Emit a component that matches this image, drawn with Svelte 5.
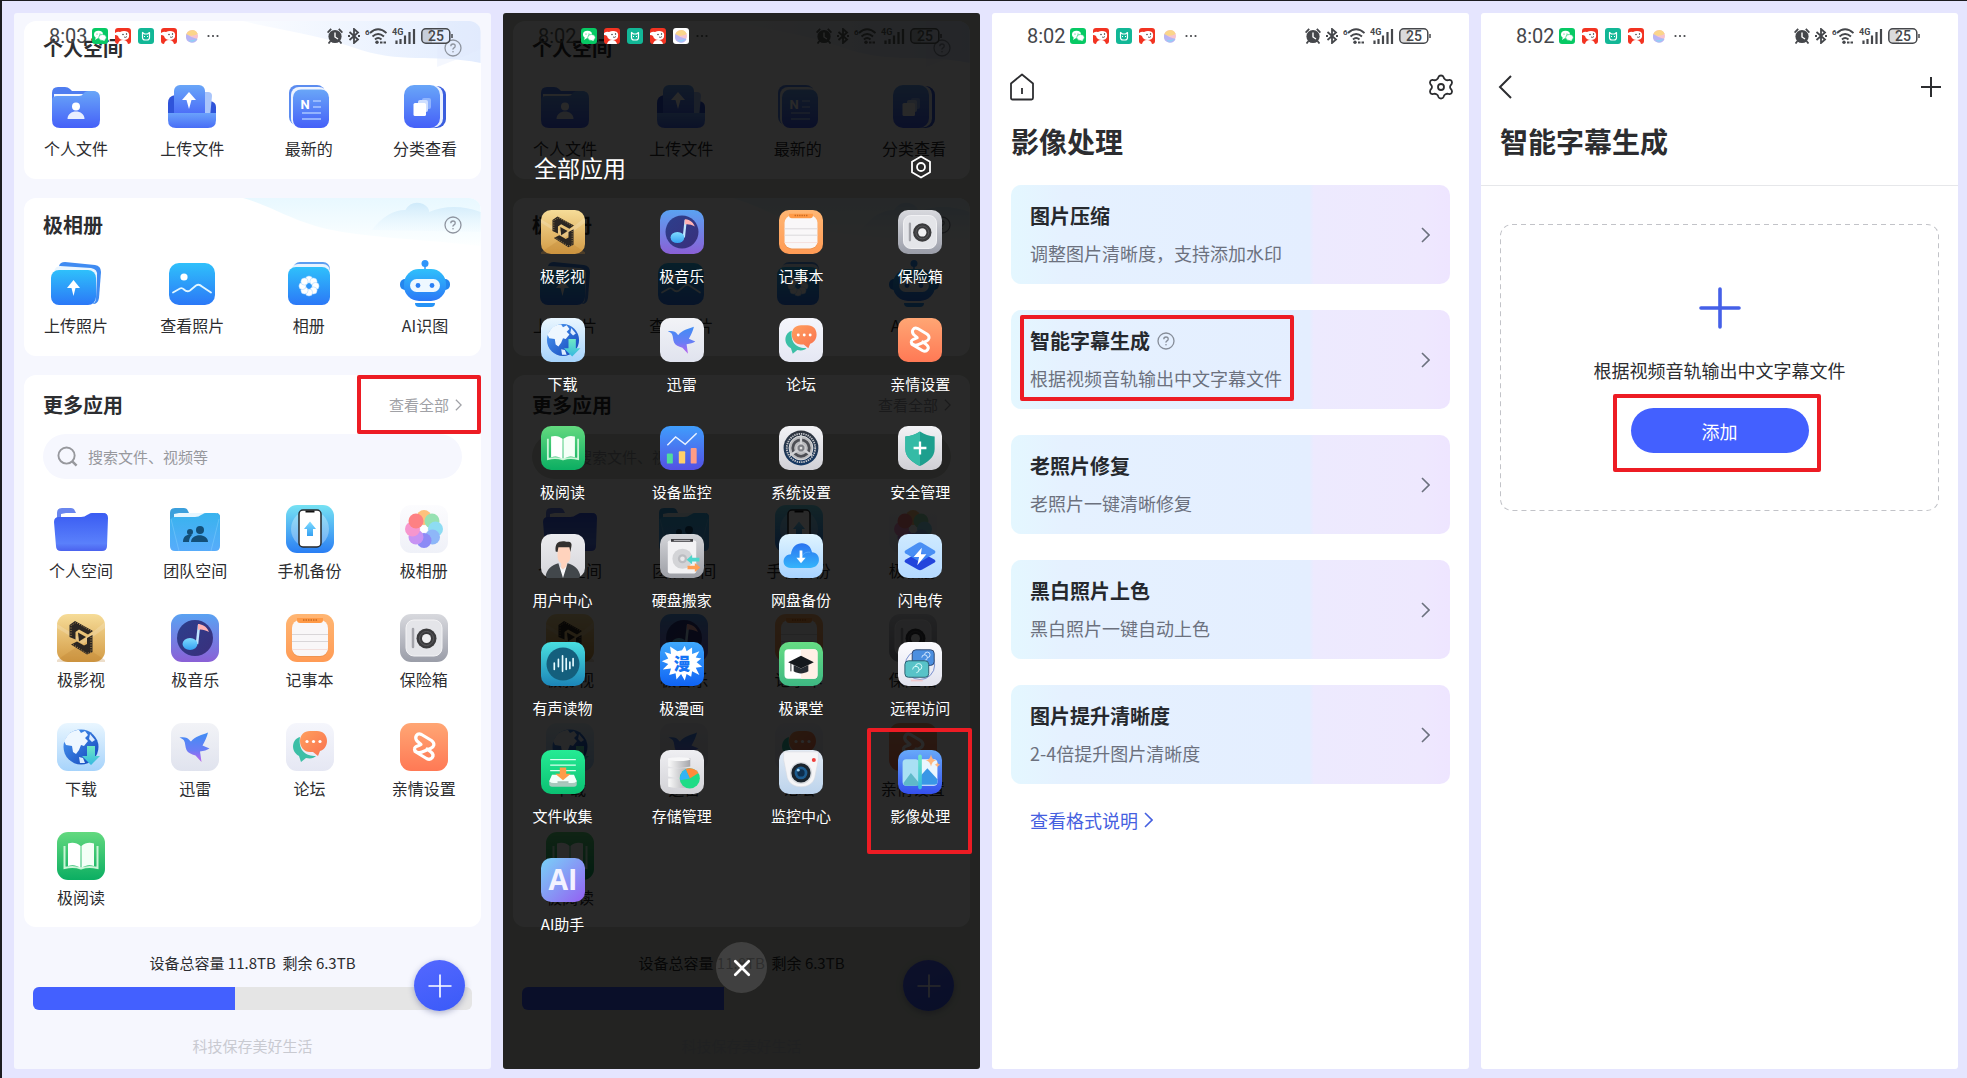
<script lang="ts">
	type Tile = { from: string; to: string; diagonal?: boolean; art: string };

	// App tiles: a rounded gradient square (48 x 48) with the artwork on top
	const tiles: Record<string, Tile> = {
		film: {
			from: '#f6dc98',
			to: '#d39b45',
			art: `<path d="M0 10L26 26L48 8V14L26 30L0 14z" fill="#fff" opacity=".18"/><path d="M0 46L24 30L48 46V48H0z" fill="#b97c2c" opacity=".25"/>
				<g fill="#2b2622"><path d="M18 7L36 17L31 20.500L22 15.500L18.500 18V25.500L12.500 23V11z"/><path d="M35.500 21V38L30 40.500L14 30.500L20 27.500L27 31.500L30 30V24z"/><path d="M21 18.500L29 23L22 27.500z"/></g>
				<path d="M14 22V11.500L19 8.500L34 17M34 23V38L30 39.500L16 30.500" fill="none" stroke="#d9ab5c" stroke-width=".8" stroke-dasharray="1 1.500"/>`
		},
		music: {
			from: '#5aa2f2',
			to: '#8a60d6',
			art: `<circle cx="24" cy="24" r="18" fill="url(#g-disc)"/><path d="M26 30L28 11" stroke="#bfe6ff" stroke-width="2.500"/>
				<path d="M27 10c3 0 9 2 11 8c-4-2-8-3-11-2z" fill="#ffb3b5"/><ellipse cx="19" cy="30" rx="7.500" ry="6" fill="url(#g-sky)"/>`
		},
		note: {
			from: '#ffb673',
			to: '#ff9b55',
			art: `<rect x="6" y="7" width="36" height="36" rx="8" fill="#e58d4c" opacity=".6"/><rect x="6" y="6" width="36" height="36" rx="8" fill="#f9f7f8"/>
				<path d="M11 4h26v2q0 3-3 3H14q-3 0-3-3z" fill="#ff9a47"/><path d="M17 6h14" stroke="#c96a20" stroke-width="1.500" stroke-dasharray="1.500 1"/>
				<path d="M6 20.500h36M6 27.500h36" stroke="#d9d6d8"/><path d="M6 35.500h36" stroke="#f3dfdc"/>`
		},
		safe: {
			from: '#d8d9de',
			to: '#9a9da8',
			art: `<rect x="6" y="6" width="36" height="36" rx="8" fill="#e4e5e9" stroke="#f3f3f5"/><path d="M13 15v18" stroke="#a3a4aa" stroke-width="2.500" stroke-linecap="round"/>
				<circle cx="26.500" cy="24.500" r="10" fill="#3b3b3d"/><circle cx="26.500" cy="24.500" r="7" fill="none" stroke="#5b5b5e"/><circle cx="26.500" cy="24.500" r="4.500" fill="#f0f0f2"/>`
		},
		download: {
			from: '#e9f6ff',
			to: '#a6d3fb',
			art: `<circle cx="24" cy="24" r="17.500" fill="url(#g-globe)"/>
				<path d="M9 15C12 9 18 7 22 7l2 3l4-2l3 4l-3 3l3 3l-4 5l-3-1l-2 5l-3 4l-3-2l-1-6l-6-1l-2-4z" fill="#eef7ff"/><path d="M33 11l5 6l-3 2l-3-3zM22 34l4 1l2 5h-5z" fill="#dcecff"/>
				<path d="M30 23h8v10h5L34 42L25 33h5z" fill="url(#g-mint)"/>`
		},
		xunlei: {
			from: '#f2f3f7',
			to: '#e0e3ee',
			art: `<path d="M8.500 14.500C11 14 14 14 16 15C18 16 19 18 20 18.500C24 13 31 12 37 9.500C36 14 34 18 31.500 22.500L38.500 25.500C36 27 33 28 29 28.500L30.500 39L24.500 32.500C20 31 17 30 15.500 27C14 24 14.500 20 13 17.500C12 16 10 15 8.500 14.500z" fill="url(#g-bird)"/>`
		},
		forum: {
			from: '#f5f6fc',
			to: '#e5e7f3',
			art: `<path d="M14 14C6 16 4 28 13 33L15 39L20 35C25 36 28 35 30 33C20 33 12 28 14 14z" fill="#3cbfa6"/>
				<path d="M24 8h7c6 0 10 4 10 10c0 5-3 9-7 10l-2 5l-5-4h-3c-6 0-10-5-10-11c0-6 4-10 10-10z" fill="url(#g-orange)"/><g fill="#fff"><circle cx="21" cy="18.500" r="1.600"/><circle cx="27.500" cy="18.500" r="1.600"/><circle cx="34" cy="18.500" r="1.600"/></g>`
		},
		family: {
			from: '#ffa674',
			to: '#ff7955',
			art: `<path d="M21 21.500l-4-3.500c-3-4 0-8.500 4.500-6.500l10 6c4 3 2.500 6.500-1 8L22 29c-3 1.500-8 0-7.500-3.500c.3-2.500 4-2.500 6.500-4zM15 28.500l11.500 7c5 2.500 9-3 4.500-6.500l-4-3" fill="none" stroke="#fff" stroke-width="3.200" stroke-linecap="round" stroke-linejoin="round"/>`
		},
		book: {
			from: '#63d97f',
			to: '#0bae62',
			art: `<path d="M7.500 14v22c6-1.500 11-1.500 16.500.5c5.500-2 10.500-2 16.500-.5V14" fill="none" stroke="#c9f5d6" stroke-width="2"/>
				<path d="M11 11.500c5-1.500 9-.5 12.500 2.500V36c-4-3-8-3.500-12.500-2z" fill="#fff"/><path d="M37 11.500c-5-1.500-9-.5-12.500 2.500V36c4-3 8-3.500 12.500-2z" fill="#f4fff7"/>`
		},
		backup: {
			from: '#76e2f3',
			to: '#2a7ef4',
			art: `<circle cx="24" cy="24" r="19" fill="#fff" opacity=".3"/><rect x="13" y="5" width="22" height="37" rx="4" fill="#fff" stroke="#25282c" stroke-width="1.500"/>
				<path d="M19.500 5.500h9v2h-9z" fill="#111"/><path d="M24 16.500l6 7.500h-3v7h-6v-7h-3z" fill="url(#g-sky)"/>`
		},
		flower: {
			from: '#fcfcfe',
			to: '#eff1f8',
			art: `<g opacity=".8"><circle cx="24" cy="12.500" r="7.500" fill="#ffb45c"/><circle cx="32" cy="16" r="7.500" fill="#7fdca0"/><circle cx="35.500" cy="24" r="7.500" fill="#74d6f2"/><circle cx="32.500" cy="32" r="7.500" fill="#75a8f8"/>
				<circle cx="24" cy="35.500" r="7.500" fill="#7472f6"/><circle cx="16" cy="32" r="7.500" fill="#bd7cf2"/><circle cx="12.500" cy="24" r="7.500" fill="#f77fc4"/><circle cx="16" cy="16" r="7.500" fill="#ff6466"/></g><circle cx="24" cy="24" r="3.500" fill="#fff"/>`
		},
		monitor: {
			from: '#3f9dfc',
			to: '#5450e4',
			art: `<path d="M8 21l9-9l10.500 8L40 8" fill="none" stroke="#e9f3ff" stroke-width="1.600"/><rect x="7.500" y="30" width="6.500" height="11" rx="1" fill="#4fdc9c"/>
				<rect x="20.500" y="27.500" width="7" height="13.500" rx="1" fill="#ffd06a"/><rect x="33.500" y="24" width="6.500" height="17" rx="1" fill="#ff9c86"/>`
		},
		settings: {
			from: '#f3f3f6',
			to: '#d0d0d6',
			art: `<circle cx="24" cy="24" r="19" fill="url(#g-navy)"/><circle cx="24" cy="24" r="15.500" fill="none" stroke="#c3c4c8" stroke-width="2" stroke-dasharray="1.500 1"/>
				<circle cx="24" cy="24" r="13" fill="#b9babd" stroke="#e1e1e3"/><circle cx="24" cy="24" r="9" fill="none" stroke="#4c4e54" stroke-width="3"/>
				<path d="M24 24V10M24 24L12 32M24 24L36 32" stroke="#d0d1d4" stroke-width="2.500"/><circle cx="24" cy="24" r="4.500" fill="#7c7e84" stroke="#e0e0e2"/><circle cx="24" cy="24" r="1.500" fill="#ddd"/>`
		},
		security: {
			from: '#f2f2f5',
			to: '#cfcfd5',
			art: `<path d="M24 6C29 9.500 34 11 40 11.500V25C40 34 32 40 24 43.500C16 40 8 34 8 25V11.500C14 11 19 9.500 24 6z" fill="#1d9f8e"/>
				<path d="M24 6V43.500C16 40 8 34 8 25V11.500C14 11 19 9.500 24 6z" fill="#35bba6"/><path d="M24 17v14M17 24h14" stroke="#fff" stroke-width="2.500"/>`
		},
		user: {
			from: '#ececef',
			to: '#d5d5da',
			art: `<path d="M18 14h14v11c0 4-3 6-4 7v6h-6v-6c-2-1-4-4-4-8z" fill="#ffd3bd"/><path d="M16 19C15 11 18 8 24 8c2 0 3 .5 5 .5c4 0 5 2 4 6l-1 5l-1-5H19l-1 5z" fill="#33302e"/>
				<path d="M19 34l5 5l5-5l3 14H16z" fill="#f6f6f8"/><path d="M5 47C6 38 12 34 19 32L24 48H7zM43 47C42 38 36 34 29 32L24 48H41z" fill="#42474b"/>`
		},
		disk: {
			from: '#d4d5d9',
			to: '#9d9fa6',
			art: `<rect x="8.500" y="7" width="31" height="36" rx="2" fill="#f2f2f4"/><path d="M12 7h24" stroke="#3b3b3f" stroke-width="3"/><path d="M15 7h18" stroke="#c6c6ca"/>
				<circle cx="24.500" cy="27" r="11" fill="#d3d4d7"/><circle cx="24.500" cy="27" r="5" fill="#bcbdc1"/><circle cx="24.500" cy="27" r="2.500" fill="#e9e9eb"/>
				<path d="M29 28l6-5v3h8v4h-8v3z" fill="#4ed6cc"/><path d="M44 36.500l-6-5v3h-8v4h8v3z" fill="#ff9f55"/>`
		},
		cloud: {
			from: '#dff4ff',
			to: '#a8d3ff',
			art: `<path d="M13 37C7 37 5 33 5 30C5 25 9 22 13 22C14 14 19 10 25 10C31 10 35 14 36 20C41 20 44 24 43.500 29C43 34 39 37 34 37z" fill="url(#g-cloud)"/>
				<path d="M34 20c-5-1-9 2-10 7" fill="none" stroke="#7fc6ff" opacity=".5"/><path d="M24 18v9" stroke="#fff" stroke-width="3"/><path d="M19 26h10l-5 6z" fill="#fff"/>`
		},
		flash: {
			from: '#cfeaff',
			to: '#b4d9ff',
			art: `<path d="M24 19L40 28q2 1.500 0 3L26 39q-2 1-4 0L8 31q-2-1.500 0-3z" fill="#2345dc"/><path d="M22 9.500q2-1 4 0L40 18q2 1.500 0 3L26 29.500q-2 1-4 0L8 21q-2-1.500 0-3z" fill="#3f88f3" opacity=".92"/>
				<path d="M26 15L17 25h6l-2 9l10-12h-6z" fill="#fff"/>`
		},
		audio: {
			from: '#49dfe0',
			to: '#1c85b8',
			art: `<circle cx="24" cy="24" r="18" fill="#145f7d"/><path d="M14.500 23v7M19 19v8M23.500 15v17M27.500 18v12M31.500 22v7M35 18v8" stroke="#e6fbff" stroke-width="1.800" stroke-linecap="round"/>`
		},
		comic: {
			from: '#3fa9fd',
			to: '#0f63f4',
			art: `<path d="M24 9l3-5l2 6l6-4v7l8-3l-4 7l6 1l-5 4l6 5l-7 1l4 8l-8-4l-1 6l-5-3l-2 7l-4-7l-5 6l-1-7l-7 2l2-7l-9 1l6-6l-7-3l7-3l-4-7l7 2l-1-8l8 5z" fill="#fff"/>
				<text x="24" y="30" text-anchor="middle" font-size="18" font-weight="900" font-family="'Noto Sans CJK SC', sans-serif" fill="#1573f5">漫</text>`
		},
		course: {
			from: '#66dd84',
			to: '#3eb883',
			art: `<rect x="6" y="8" width="36" height="32" rx="4" fill="#fff"/><path d="M24 8h14q4 0 4 4v24q0 4-4 4H24z" fill="#fff0e6"/>
				<path d="M24 15L10 22l14 7l14-7z" fill="#15191d"/><path d="M16 25v7c5 3 11 3 16 0v-7l-8 4z" fill="#262b31"/><path d="M13 23v9" stroke="#15191d"/>`
		},
		remote: {
			from: '#fbfbfe',
			to: '#e2e3ee',
			art: `<circle cx="24" cy="25" r="16" fill="none" stroke="#4d6cc0" stroke-width=".8"/><rect x="15.500" y="8.500" width="24" height="17" rx="4" fill="#4b8fe0" stroke="#2b3f66"/>
				<path d="M26 17a3 3 0 1 1 3 3M29 14a3 3 0 1 1 3 3" fill="none" stroke="#dcebff"/><rect x="7.500" y="20.500" width="26" height="18" rx="4" fill="#58c3c8" stroke="#27596a"/>
				<path d="M16 30a3.500 3.500 0 1 1 4 3.500M19 27a3.500 3.500 0 1 1 4 3.500" fill="none" stroke="#e4ffff"/><path d="M14 42h13" stroke="#f0c9cd" stroke-width="2"/>`
		},
		collect: {
			from: '#25eb94',
			to: '#0bc173',
			art: `<path d="M10 10.500h28M10 16.500h28M10 22.500h28" stroke="#d9ffee" stroke-width="1.500"/><path d="M12 28h24l3 6v3q0 3-3 3H12q-3 0-3-3v-3z" fill="#a8c9bd"/>
				<path d="M12 27h24l3 7q-2 2-5 2H14q-3 0-5-2z" fill="#f3fffa"/><path d="M20.500 19h7v7h5L24 33l-8.500-7h5z" fill="#ff9c49"/><path d="M18 35h12" stroke="#8fb0a5" stroke-width="1.500"/>`
		},
		storage: {
			from: '#efeff2',
			to: '#d2d2d7',
			art: `<g fill="url(#g-steel)"><path d="M9 9h24v9q-12 3-24 0z"/><path d="M9 20h24v9q-12 3-24 0z"/><path d="M9 31h24v9q-12 3-24 0z"/></g><ellipse cx="21" cy="10" rx="12" ry="2" fill="#f7f7f8"/>
				<circle cx="32.500" cy="31" r="11" fill="#1fdc86"/><path d="M32.500 31L28 21A11 11 0 0 1 42 25z" fill="#ff8b3a"/><path d="M32.500 31L28 21A11 11 0 0 0 22 33z" fill="#33b4f5"/>`
		},
		camera: {
			from: '#e2ebf5',
			to: '#bcd3ec',
			art: `<path d="M5 2h38v8l-4 20c-2 7-8 10-15 10S11 37 9 30L5 10z" fill="#f5f5f7" stroke="#d8dbe0" stroke-width=".6"/><circle cx="24" cy="25" r="12" fill="#d9dce0"/><circle cx="24" cy="25" r="10.500" fill="#1b242d"/>
				<circle cx="24" cy="25" r="7" fill="#1d5c8f"/><circle cx="24" cy="25" r="4" fill="#0d2d4c"/><circle cx="21" cy="22" r="1.500" fill="#9fd2ef"/><circle cx="38" cy="11" r="2.200" fill="#f0403c"/>`
		},
		image: {
			from: '#67a9fa',
			to: '#3550ee',
			art: `<rect x="5" y="10" width="18" height="29" rx="4" fill="#a9e0f4"/><path d="M6 36l8-11l9 11v3H9q-3 0-3-3z" fill="#5fb9c9"/><path d="M24 10h15q4 0 4 4v21q0 4-4 4H24z" fill="#eaf6ff"/>
				<path d="M24 38v-9l8-9l11 12v3q0 3-3 3z" fill="#3a97e6"/><rect x="22" y="5" width="4" height="38" rx="2" fill="url(#g-mint)"/>
				<path d="M36 5q1 6 6 6.500q-5 .5-6 6.500q-1-6-6-6.500q5-.5 6-6.500zM43 13q.5 3 3 3q-2.500.5-3 3q-.5-2.500-3-3q2.500 0 3-3z" fill="#ffb57c"/>`
		},
		ai: {
			from: '#79d2f8',
			to: '#9460f2',
			diagonal: true,
			art: `<text x="24" y="35" text-anchor="middle" font-size="31" font-weight="700" font-family="'Open Sans', sans-serif" fill="#f3f2ff">AI</text>`
		}
	};

	// Icons without a tile behind them
	const glyphs: Record<string, string> = {
		folder: `<path d="M0 8q0-5 5-5h9q3 0 4 3l1 2h27q4 0 4 4v20H0z" fill="#6a86ee"/><path d="M4 14V9l5-1h38v6z" fill="#fff"/><path d="M-3 17q0-5 5-5h22q4 0 6-2l2-1q1-1 3-1h11q5 0 5 5l-1 28q0 5-5 5H4q-5 0-5-5z" fill="url(#g-folder)"/>`,
		team: `<path d="M-1 8q0-5 5-5h9q3 0 4 3l1 2h27q4 0 4 4v20H-1z" fill="#3b9fdc"/><path d="M3 14V9l5-1h38v6z" fill="#e6f6ff"/><path d="M-1 17q0-5 5-5h20q4 0 6-2l2-1q1-1 3-1h9q5 0 5 5v28q0 5-5 5H4q-5 0-5-5z" fill="url(#g-team)"/>
			<path d="M0 14L8 46M48 14L40 46" stroke="#8fd6ff" opacity=".4"/><g fill="#134f78"><circle cx="29" cy="25" r="4"/><path d="M20 37c0-9 17-9 17 0z"/><circle cx="19" cy="27" r="3"/><path d="M12 37c0-6 4-8 9-7c-2 2-3 4-3 7z"/></g>`,
		personalFile: `<path d="M1 12q0-6 6-6h7q3 0 5 2l2 2h20q7 0 7 6v10H1z" fill="#4f7df0"/><path d="M3 13h30l-3 4H3z" fill="#f3f7ff"/><path d="M1 20q0-5 5-5h22q3 0 4-2q2-3 6-3h4q7 0 7 7v22q0 8-8 8H9q-8 0-8-8z" fill="url(#g-indigo)"/><circle cx="25" cy="25.500" r="4" fill="#fff"/><path d="M16.500 38c0-10 17-10 17 0z" fill="#e8efff"/>`,
		uploadFile: `<path d="M1 22q0-7 7-8v22H1z" fill="#2f54da"/><path d="M49 26q0-5-6-6v18h6z" fill="#2f54da"/><path d="M36 11h5q4 0 4 4L43 36H34z" fill="#a9c5fb"/><rect x="7" y="4" width="31" height="36" rx="6" fill="url(#g-indigo)"/>
			<path d="M22 11l7 8h-4.500L22 28l-2.500-9H15z" fill="#fff"/><path d="M1 32h48v7q0 8-8 8H9q-8 0-8-8z" fill="url(#g-tray)"/>`,
		recent: `<rect x="5" y="4" width="36" height="40" rx="8" fill="#5b8cf0"/><rect x="7" y="6" width="36" height="40" rx="8" fill="#eef4ff"/><rect x="9" y="8.500" width="36" height="38.500" rx="8" fill="url(#g-indigo)"/>
			<text x="21" y="28" text-anchor="middle" font-size="13" font-weight="700" font-family="Roboto, sans-serif" fill="#fff">N</text><path d="M29 20h8M29 26h8M18 32h19M18 38h19" stroke="#a9c6ff" stroke-width="1.500"/>`,
		category: `<rect x="12" y="5" width="34" height="42" rx="9" fill="#3a5ede"/><rect x="9" y="4.500" width="34" height="42" rx="9" fill="#e8f0ff"/><rect x="4" y="4" width="36" height="43" rx="10" fill="url(#g-indigo)"/>
			<rect x="22" y="17" width="9" height="11" rx="2" fill="#a8c6ff" opacity=".7"/><rect x="18" y="19" width="10" height="12" rx="2" fill="#cfdfff"/><rect x="13.500" y="22" width="12.500" height="13" rx="1.500" fill="#fff"/>`,
		uploadPhoto: `<path d="M8 8q1-4 6-4l30 3q6 1 6 7l-2 26q-1 6-6 6z" fill="#3f8bf2"/><path d="M3 14q1-6 6-6l31 2q7 1 6 8l-1 22q0 5-4 6z" fill="#eaf6ff"/><rect x="0" y="12" width="45" height="35" rx="8" fill="url(#g-azure)"/><path d="M22.500 22l6.500 8h-4.500l-2 8l-2-8H16z" fill="#fff"/>`,
		viewPhoto: `<rect x="2" y="5" width="46" height="42" rx="10" fill="url(#g-azure)"/><circle cx="17" cy="19" r="3.600" fill="#fff"/><path d="M6 34.500l7-4q2-1 4 1q3 3 6 1l6-5q3-2 6 1l9 6" fill="none" stroke="#e2f7ff" stroke-width="1.800" stroke-linecap="round"/>`,
		album: `<rect x="9" y="4" width="37" height="30" rx="7" fill="#5b9df0"/><rect x="7" y="6" width="39" height="30" rx="7" fill="#e6f3ff"/><rect x="4" y="9" width="42" height="38" rx="8" fill="url(#g-azure)"/>
			<g fill="#fff" stroke="#9fd0ff" stroke-width=".5"><circle cx="25" cy="21.500" r="3.600"/><circle cx="29.500" cy="23.500" r="3.600"/><circle cx="31.500" cy="28" r="3.600"/><circle cx="29.500" cy="32.500" r="3.600"/><circle cx="25" cy="34.500" r="3.600"/><circle cx="20.500" cy="32.500" r="3.600"/><circle cx="18.500" cy="28" r="3.600"/><circle cx="20.500" cy="23.500" r="3.600"/></g><circle cx="25" cy="28" r="2" fill="#2f95fa"/>`,
		robot: `<circle cx="25" cy="5.500" r="3.500" fill="#2f95fa"/><path d="M25 8v5" stroke="#2f95fa" stroke-width="1.500"/><rect x="0" y="21" width="50" height="11" rx="5" fill="#2386ee"/><rect x="4" y="11" width="42" height="32" rx="15" fill="url(#g-azure)"/>
			<rect x="10" y="21" width="30" height="13" rx="6.500" fill="#eef8ff"/><circle cx="18" cy="27.500" r="2.400" fill="#2a7ff5"/><circle cx="32" cy="27.500" r="2.400" fill="#2a7ff5"/><path d="M15 45h20q0 4-4 4H19q-4 0-4-4z" fill="#2693f6"/>`
	};

	const spaceFiles = [
		{ icon: 'personalFile', label: '个人文件' },
		{ icon: 'uploadFile', label: '上传文件' },
		{ icon: 'recent', label: '最新的' },
		{ icon: 'category', label: '分类查看' }
	];

	const spacePhotos = [
		{ icon: 'uploadPhoto', label: '上传照片' },
		{ icon: 'viewPhoto', label: '查看照片' },
		{ icon: 'album', label: '相册' },
		{ icon: 'robot', label: 'AI识图' }
	];

	const sharedApps = [
		{ icon: 'film', label: '极影视' },
		{ icon: 'music', label: '极音乐' },
		{ icon: 'note', label: '记事本' },
		{ icon: 'safe', label: '保险箱' },
		{ icon: 'download', label: '下载' },
		{ icon: 'xunlei', label: '迅雷' },
		{ icon: 'forum', label: '论坛' },
		{ icon: 'family', label: '亲情设置' },
		{ icon: 'book', label: '极阅读' }
	];

	const homeApps = [
		{ icon: 'folder', label: '个人空间' },
		{ icon: 'team', label: '团队空间' },
		{ icon: 'backup', label: '手机备份' },
		{ icon: 'flower', label: '极相册' },
		...sharedApps
	];

	const allApps = [
		...sharedApps,
		{ icon: 'monitor', label: '设备监控' },
		{ icon: 'settings', label: '系统设置' },
		{ icon: 'security', label: '安全管理' },
		{ icon: 'user', label: '用户中心' },
		{ icon: 'disk', label: '硬盘搬家' },
		{ icon: 'cloud', label: '网盘备份' },
		{ icon: 'flash', label: '闪电传' },
		{ icon: 'audio', label: '有声读物' },
		{ icon: 'comic', label: '极漫画' },
		{ icon: 'course', label: '极课堂' },
		{ icon: 'remote', label: '远程访问' },
		{ icon: 'collect', label: '文件收集' },
		{ icon: 'storage', label: '存储管理' },
		{ icon: 'camera', label: '监控中心' },
		{ icon: 'image', label: '影像处理', marked: true },
		{ icon: 'ai', label: 'AI助手' }
	];

	const tools = [
		{ title: '图片压缩', desc: '调整图片清晰度，支持添加水印' },
		{ title: '智能字幕生成', desc: '根据视频音轨输出中文字幕文件', marked: true },
		{ title: '老照片修复', desc: '老照片一键清晰修复' },
		{ title: '黑白照片上色', desc: '黑白照片一键自动上色' },
		{ title: '图片提升清晰度', desc: '2-4倍提升图片清晰度' }
	];

	const usedPercent = 46;
</script>

{#snippet statusBar(time: string, ballTile = false)}
	<div class="status">
		<span class="time">{time}</span>
		<svg class="notice" viewBox="0 0 16 16">
			<rect width="16" height="16" rx="3" fill="#07c964" />
			<ellipse cx="6.500" cy="6.500" rx="4.500" ry="3.700" fill="#fff" />
			<path d="M3 12l1-3 2 1z" fill="#fff" />
			<ellipse cx="10.500" cy="9.500" rx="3.800" ry="3.100" fill="#fff" stroke="#07c964" stroke-width=".6" />
			<circle cx="5" cy="6" r=".6" fill="#07c964" /><circle cx="8" cy="6" r=".6" fill="#07c964" />
			<path d="M12.500 13l0-2-2 1z" fill="#fff" />
		</svg>
		{@render dog()}
		<svg class="notice" viewBox="0 0 16 16">
			<rect width="16" height="16" rx="3" fill="#12b796" />
			<path d="M4.500 4.500v5q0 2.500 2.500 2.500h2q2.500 0 2.500-2.500v-5l-2 1.500h-3z" fill="none" stroke="#fff" stroke-width="1.200" stroke-linejoin="round" />
			<path d="M6 8.500h1M9 8.500h1" stroke="#fff" />
		</svg>
		{@render dog()}
		<svg class="notice" viewBox="0 0 16 16">
			{#if ballTile}<rect width="16" height="16" rx="3" fill="#fff" />{/if}
			<circle cx="8" cy="8" r="6" fill="#f7c3cf" />
			<path d="M2.200 7a6 6 0 0 1 11.500-1Q9 9 2.200 7z" fill="#fbd58a" />
			<path d="M2.500 6q5 4 11 5A6 6 0 0 1 2 8z" fill="#b9b4f3" />
			<path d="M5 12q4 1 8-1.500A6 6 0 0 1 5 13z" fill="#8fd0f5" />
		</svg>
		<svg class="dots" viewBox="0 0 12 16"><g fill="currentColor"><circle cx="1.500" cy="8" r="1.100" /><circle cx="6" cy="8" r="1.100" /><circle cx="10.500" cy="8" r="1.100" /></g></svg>
		<div class="signals">
			<svg width="16" height="16" viewBox="0 0 16 16">
				<circle cx="8" cy="8.500" r="6.600" fill="currentColor" />
				<path d="M.6 4.600l3.600-3.800M15.400 4.600l-3.600-3.800M3.500 13L1.500 15.500M12.500 13l2 2.500" stroke="currentColor" stroke-width="1.800" />
				<path class="hands" d="M8 4.500v4.500l3 2" fill="none" stroke-width="1.400" />
			</svg>
			<svg width="12" height="16" viewBox="0 0 12 16">
				<path d="M1.500 4l8.500 7.500L6 15V1l4 3.500L1.500 12" fill="none" stroke="currentColor" stroke-width="1.800" />
				<path d="M0 8h2M10 8h2" stroke="currentColor" stroke-width="1.800" />
			</svg>
			<svg width="22" height="16" viewBox="0 0 22 16">
				<text x="0" y="7" font-size="8" font-weight="700" font-family="Roboto, sans-serif" fill="currentColor">6</text>
				<path d="M5 5q8-7.500 16.500 0M7.500 8.500q5.500-5 11.500 0M10 11.500q3-3 6.500 0" fill="none" stroke="currentColor" stroke-width="1.900" />
				<circle cx="12" cy="14.200" r="1.700" fill="currentColor" /><path d="M15 14.500h2.500M18.500 14.500H21" stroke="currentColor" stroke-width="2.200" />
			</svg>
			<svg width="24" height="16" viewBox="0 0 24 16">
				<text x="0" y="7" font-size="9" font-weight="700" font-family="Roboto, sans-serif" fill="currentColor">4G</text>
				<path d="M4.500 16v-3.500M8.500 16v-5M13 16V7.500M17.500 16V4M22 16V1" stroke="currentColor" stroke-width="2.200" />
			</svg>
			<svg width="32" height="16" viewBox="0 0 32 16">
				<path d="M5 1h6v14H5q-4 0-4-4V5q0-4 4-4z" fill="currentColor" opacity=".2" />
				<rect x=".8" y=".8" width="28" height="14.400" rx="4" fill="none" stroke="currentColor" stroke-width="1.500" />
				<path d="M31 6v4" stroke="currentColor" stroke-width="1.500" />
				<text x="15" y="13" text-anchor="middle" font-size="14" font-weight="500" font-family="Roboto, sans-serif" fill="currentColor">25</text>
			</svg>
		</div>
	</div>
{/snippet}

{#snippet dog()}
	<svg class="notice" viewBox="0 0 16 16">
		<rect width="16" height="16" rx="3" fill="#f23321" />
		<path d="M0 5q3-2 5-1q4-2 8 0q2 2 1 5q-1 3-5 3q-5 0-6-4q-1-1-3-1zM3 16q1-4 5-4t5 4z" fill="#fff" />
		<circle cx="8" cy="6.500" r=".7" fill="#222" /><circle cx="11.500" cy="6" r=".7" fill="#222" />
		<path d="M9 9q1.500 1 3-.5" fill="none" stroke="#222" stroke-width=".7" />
	</svg>
{/snippet}

{#snippet appIcon(name: string)}
	<svg class="app-icon" viewBox="0 0 48 48" aria-hidden="true">
		{#if tiles[name]}
			<rect width="48" height="48" rx="11" fill="url(#tile-{name})" />
			{@html tiles[name].art}
		{:else}
			{@html glyphs[name]}
		{/if}
	</svg>
{/snippet}

{#snippet help()}
	<svg class="help" viewBox="0 0 18 18">
		<circle cx="9" cy="9" r="8" fill="none" stroke="currentColor" stroke-width="1.300" />
		<path d="M6.800 7.200q0-2.200 2.200-2.200t2.200 2q0 1.200-1.200 1.900t-1 1.800" fill="none" stroke="currentColor" stroke-width="1.300" />
		<circle cx="9" cy="12.700" r=".8" fill="currentColor" />
	</svg>
{/snippet}

{#snippet chevron()}
	<svg class="chevron" viewBox="0 0 9 16"><path d="M1 1l7 7-7 7" fill="none" stroke="currentColor" stroke-width="1.600" /></svg>
{/snippet}

{#snippet home(dimmed = false)}
	<div class="home" class:dimmed inert={dimmed} aria-hidden={dimmed}>
		<section class="card">
			<svg class="decor" viewBox="0 0 240 48" preserveAspectRatio="none">
				<path d="M0 0h240v42C190 32 160 44 110 26C70 12 30 8 0 0z" fill="url(#g-decor-a)" />
				<path d="M196 0h44v28q-22 10-44 18z" fill="#dfe9fd" opacity=".35" />
			</svg>
			<header class="card-head">
				<h2>个人空间</h2>
				<button class="icon-btn muted" aria-label="说明">{@render help()}</button>
			</header>
			<div class="shortcuts">
				{#each spaceFiles as item}
					<button class="shortcut">
						<svg viewBox="0 0 50 50" aria-hidden="true">{@html glyphs[item.icon]}</svg>
						<span>{item.label}</span>
					</button>
				{/each}
			</div>
		</section>

		<section class="card">
			<svg class="decor" viewBox="0 0 240 48" preserveAspectRatio="none">
				<path d="M0 0h240v48C190 42 130 40 90 32C50 24 30 8 0 0z" fill="url(#g-decor-b)" />
				<path d="M130 32q16-20 34-20q6-10 18-6q6 3 6 8q24-10 52 0v20z" fill="url(#g-decor-c)" />
			</svg>
			<header class="card-head">
				<h2>极相册</h2>
				<button class="icon-btn muted" aria-label="说明">{@render help()}</button>
			</header>
			<div class="shortcuts">
				{#each spacePhotos as item}
					<button class="shortcut">
						<svg viewBox="0 0 50 50" aria-hidden="true">{@html glyphs[item.icon]}</svg>
						<span>{item.label}</span>
					</button>
				{/each}
			</div>
		</section>

		<section class="card">
			<header class="card-head tall">
				<h2>更多应用</h2>
				<a class="more" href="#all">查看全部 {@render chevron()}</a>
			</header>
			{#if !dimmed}<div class="mark mark-more"></div>{/if}
			<label class="search">
				<svg viewBox="0 0 22 22" aria-hidden="true">
					<circle cx="10" cy="10" r="8.500" fill="none" stroke="currentColor" stroke-width="2" />
					<path d="M16 16l4.500 4.500" stroke="currentColor" stroke-width="2.600" />
				</svg>
				<input type="search" placeholder="搜索文件、视频等" aria-label="搜索" />
			</label>
			<div class="app-grid">
				{#each homeApps as app}
					<button class="app">
						{@render appIcon(app.icon)}
						<span>{app.label}</span>
					</button>
				{/each}
			</div>
		</section>

		<footer class="capacity">
			<p>设备总容量 11.8TB&nbsp; 剩余 6.3TB</p>
			<div class="track"><div class="used" style="width: {usedPercent}%"></div></div>
			<small>科技保存美好生活</small>
			<button class="fab" aria-label="添加">
				<svg viewBox="0 0 24 24"><path d="M12 .5v23M.5 12h23" stroke="currentColor" stroke-width="1.600" /></svg>
			</button>
		</footer>
	</div>
{/snippet}

<svg class="defs" aria-hidden="true">
	<defs>
		{#each Object.entries(tiles) as [name, tile]}
			<linearGradient id="tile-{name}" x1="0" y1="0" x2={tile.diagonal ? 1 : 0} y2="1">
				<stop offset="0" stop-color={tile.from} />
				<stop offset="1" stop-color={tile.to} />
			</linearGradient>
		{/each}
		<linearGradient id="g-disc" x1="0" y1="0" x2="1" y2="1"><stop stop-color="#2c3f8c" /><stop offset="1" stop-color="#3a2f7c" /></linearGradient>
		<linearGradient id="g-sky" x1="0" y1="0" x2="0" y2="1"><stop stop-color="#7fdcff" /><stop offset="1" stop-color="#35a0f2" /></linearGradient>
		<linearGradient id="g-globe" x1="0" y1="0" x2="1" y2="1"><stop stop-color="#4c9bf4" /><stop offset="1" stop-color="#1243b8" /></linearGradient>
		<linearGradient id="g-mint" x1="0" y1="0" x2="0" y2="1"><stop stop-color="#6fe8c4" /><stop offset="1" stop-color="#35b9e0" /></linearGradient>
		<linearGradient id="g-bird" x1="0" y1="0" x2="0" y2="1"><stop stop-color="#3f8df5" /><stop offset=".6" stop-color="#6a7df5" /><stop offset="1" stop-color="#bd62ee" /></linearGradient>
		<linearGradient id="g-orange" x1="0" y1="0" x2="1" y2="1"><stop stop-color="#ff9f5e" /><stop offset="1" stop-color="#f9724f" /></linearGradient>
		<linearGradient id="g-navy" x1="0" y1="0" x2="0" y2="1"><stop stop-color="#31353c" /><stop offset="1" stop-color="#123764" /></linearGradient>
		<linearGradient id="g-cloud" x1="0" y1="0" x2="0" y2="1"><stop stop-color="#2a73f0" /><stop offset="1" stop-color="#35b4fb" /></linearGradient>
		<linearGradient id="g-steel" x1="0" y1="0" x2="1" y2="0"><stop stop-color="#fafafa" /><stop offset="1" stop-color="#a5a6ab" /></linearGradient>
		<linearGradient id="g-folder" x1="0" y1="0" x2="0" y2="1"><stop stop-color="#3a5cf2" /><stop offset=".8" stop-color="#5a80fb" /><stop offset="1" stop-color="#4b62ee" /></linearGradient>
		<linearGradient id="g-team" x1="0" y1="0" x2="0" y2="1"><stop stop-color="#38b3ee" /><stop offset="1" stop-color="#58acfb" /></linearGradient>
		<linearGradient id="g-indigo" x1="0" y1="0" x2="0" y2="1"><stop stop-color="#69a6f8" /><stop offset="1" stop-color="#4560f8" /></linearGradient>
		<linearGradient id="g-tray" x1="0" y1="0" x2="0" y2="1"><stop stop-color="#6aa2fb" /><stop offset="1" stop-color="#486df6" /></linearGradient>
		<linearGradient id="g-azure" x1="0" y1="0" x2="0" y2="1"><stop stop-color="#2fc0fb" /><stop offset="1" stop-color="#2b78f7" /></linearGradient>
		<linearGradient id="g-decor-a" x1="0" y1="0" x2="1" y2="0"><stop stop-color="#fafcff" /><stop offset="1" stop-color="#e2ecfe" /></linearGradient>
		<linearGradient id="g-decor-b" x1="0" y1="0" x2="0" y2="1"><stop stop-color="#e8f8ff" /><stop offset="1" stop-color="#fdffff" /></linearGradient>
		<linearGradient id="g-decor-c" x1="0" y1="0" x2="0" y2="1"><stop stop-color="#cfeafa" /><stop offset="1" stop-color="#f0faff" stop-opacity=".4" /></linearGradient>
	</defs>
</svg>

<main class="board">
	<div class="phone tinted">
		<div class="status-over">{@render statusBar('8:03')}</div>
		{@render home()}
	</div>

	<div class="phone tinted shaded">
		{@render home(true)}
		<div class="overlay">
			<header class="overlay-head">
				<h2>全部应用</h2>
				<button class="icon-btn" aria-label="设置">
					<svg width="24" height="24" viewBox="0 0 24 24" fill="none" stroke="currentColor" stroke-width="1.800">
						<path d="M12 1.500l9 5.200v10.600l-9 5.200-9-5.200V6.700z" stroke-linejoin="round" />
						<circle cx="12" cy="12" r="4" />
					</svg>
				</button>
			</header>
			<div class="app-grid all">
				{#each allApps as app}
					<button class="app">
						{@render appIcon(app.icon)}
						<span>{app.label}</span>
						{#if app.marked}<span class="mark mark-app"></span>{/if}
					</button>
				{/each}
			</div>
			<button class="close" aria-label="关闭">
				<svg viewBox="0 0 16 16"><path d="M2 2l12 12M14 2L2 14" stroke="currentColor" stroke-width="2.400" stroke-linecap="round" /></svg>
			</button>
		</div>
		<div class="status-over">{@render statusBar('8:02', true)}</div>
	</div>

	<div class="phone">
		{@render statusBar('8:02')}
		<nav class="toolbar">
			<button class="icon-btn" aria-label="首页">
				<svg width="26" height="28" viewBox="0 0 26 28" fill="none" stroke="currentColor" stroke-width="1.800" stroke-linejoin="round">
					<path d="M2 10.500L13 1.500l11 9V25q0 1.500-1.500 1.500h-19Q2 26.500 2 25z" />
					<path d="M13 15v6" />
				</svg>
			</button>
			<button class="icon-btn" aria-label="设置">
				<svg width="26" height="26" viewBox="0 0 26 26" fill="none" stroke="currentColor" stroke-width="1.800" stroke-linejoin="round">
					<path d="M10.500 3q.5-1.500 2.500-1.500T15.500 3q.5 2 2 2.800t3.500.2q2-.3 2.700 1.200t-.2 3q-1.500 1.300-1.500 2.800t1.500 2.800q1 1.500.2 3T21 20q-2-.6-3.500.2t-2 2.800q-.5 1.500-2.500 1.500T10.500 23q-.5-2-2-2.800T5 20q-2 .3-2.700-1.200t.2-3Q4 14.500 4 13t-1.500-2.800q-1-1.500-.2-3T5 6q2 .6 3.500-.2t2-2.800z" />
					<circle cx="13" cy="13" r="3" />
				</svg>
			</button>
		</nav>
		<h1>影像处理</h1>
		<div class="tools">
			{#each tools as tool}
				<button class="tool">
					<span class="tool-text">
						<strong>{tool.title}{#if tool.marked}{@render help()}{/if}</strong>
						<span>{tool.desc}</span>
					</span>
					{@render chevron()}
					{#if tool.marked}<span class="mark mark-tool"></span>{/if}
				</button>
			{/each}
		</div>
		<a class="formats" href="#formats">查看格式说明 {@render chevron()}</a>
	</div>

	<div class="phone">
		{@render statusBar('8:02')}
		<nav class="toolbar">
			<button class="icon-btn" aria-label="返回">
				<svg width="14" height="24" viewBox="0 0 14 24"><path d="M13 1L2 12l11 11" fill="none" stroke="currentColor" stroke-width="2" /></svg>
			</button>
			<button class="icon-btn" aria-label="添加">
				<svg width="24" height="22" viewBox="0 0 24 22"><path d="M12 1v20M2 11h20" stroke="currentColor" stroke-width="2" /></svg>
			</button>
		</nav>
		<h1 class="ruled">智能字幕生成</h1>
		<div class="drop">
			<svg class="outline" aria-hidden="true"><rect width="100%" height="100%" rx="12" fill="none" stroke="#c2c3c8" stroke-width="2" stroke-dasharray="5 4" /></svg>
			<svg class="plus" viewBox="0 0 42 42" aria-hidden="true"><path d="M21 2v38M2 21h38" stroke="#4560e8" stroke-width="3.600" stroke-linecap="round" /></svg>
			<p>根据视频音轨输出中文字幕文件</p>
			<button class="add">添加<span class="mark mark-add"></span></button>
		</div>
	</div>
</main>

<style>
	:global(body) {
		background: #e5e5fe;
	}

	.defs {
		display: block;
		width: 0;
		height: 0;
	}

	.board {
		box-sizing: border-box;
		min-height: 100vh;
		display: grid;
		grid-template-columns: repeat(4, minmax(0, 1fr));
		gap: 12px;
		padding: 12px 9px 9px 12px;
		border-top: 1px solid #1c1c20;
		border-left: 2px solid #1c1c20;
		font-family: 'Noto Sans CJK SC', sans-serif;
		color: #2c2d30;
	}

	.phone {
		position: relative;
		display: flex;
		flex-direction: column;
		background: #fff;
		border-radius: 3px;
		overflow: hidden;
	}

	.phone.tinted {
		background: #f6f7fe;
	}

	.phone.shaded {
		background: #d6dbd0;
	}

	button {
		padding: 0;
		border: 0;
		background: none;
		font: inherit;
		color: inherit;
	}

	a {
		text-decoration: none;
	}

	h1,
	h2,
	p {
		margin: 0;
	}

	/* status bar */
	.status {
		display: flex;
		align-items: center;
		gap: 7px;
		height: 46px;
		padding: 0 38px 0 35px;
		color: #45474b;
	}

	.status-over {
		position: absolute;
		inset: 0 0 auto;
		z-index: 2;
		pointer-events: none;
	}

	.shaded .status {
		color: #101110;
	}

	.time {
		margin-right: -3px;
		font: 20px Roboto, sans-serif;
	}

	.notice {
		width: 16px;
		height: 16px;
	}

	.dots {
		width: 12px;
		height: 16px;
	}

	.signals {
		display: flex;
		gap: 5px;
		margin-left: auto;
	}

	.hands {
		stroke: #fff;
	}

	.shaded .hands {
		stroke: #2a2a2a;
	}

	/* home screen */
	.home {
		display: flex;
		flex-direction: column;
		gap: 19px;
		padding-top: 8px;
	}

	.card {
		position: relative;
		margin: 0 10px;
		border-radius: 12px;
		background: #fff;
	}

	.decor {
		position: absolute;
		top: 0;
		right: 0;
		width: 52%;
		height: 48px;
		border-top-right-radius: 12px;
	}

	.card-head {
		position: relative;
		display: flex;
		align-items: center;
		justify-content: space-between;
		height: 54px;
		padding: 0 19px;
	}

	.card-head.tall {
		height: 59px;
	}

	.card-head h2 {
		font-size: 20px;
		line-height: 28px;
		font-weight: 700;
	}

	.icon-btn {
		display: flex;
	}

	.muted {
		color: #8f95a0;
	}

	.help {
		width: 18px;
		height: 18px;
	}

	.chevron {
		width: 9px;
		height: 16px;
	}

	.shortcuts {
		display: flex;
		justify-content: space-between;
		padding: 6px 23px 19px 19px;
	}

	.shortcut,
	.app {
		position: relative;
		display: flex;
		flex-direction: column;
		align-items: center;
		gap: 5px;
		font-size: 16px;
		line-height: 24px;
		white-space: nowrap;
	}

	.shortcut {
		width: 66px;
	}

	.shortcut svg {
		width: 50px;
		height: 50px;
	}

	.more {
		display: flex;
		align-items: center;
		gap: 6px;
		font-size: 15px;
		color: #a0a1a6;
	}

	.more .chevron {
		width: 7px;
		height: 12px;
	}

	.search {
		display: flex;
		align-items: center;
		gap: 10px;
		height: 45px;
		margin: 0 19px;
		padding: 0 14px;
		border-radius: 23px;
		background: #f6f7fe;
		color: #97989d;
	}

	.search svg {
		width: 21px;
		height: 21px;
	}

	.search input {
		flex: 1;
		min-width: 0;
		padding: 0;
		border: 0;
		outline: 0;
		background: none;
		font: inherit;
		font-size: 15px;
		color: #2c2d30;
	}

	.search input::placeholder {
		color: #97989d;
		opacity: 1;
	}

	.app-grid {
		display: grid;
		grid-template-columns: repeat(4, 1fr);
		row-gap: 32px;
		padding: 26px 0 18px;
	}

	.app-icon {
		width: 48px;
		height: 48px;
		overflow: visible;
	}

	.capacity {
		position: relative;
		display: flex;
		flex-direction: column;
		padding: 5px 19px 11px;
		text-align: center;
		font-size: 15px;
		line-height: 24px;
	}

	.track {
		height: 23px;
		margin: 12px 0 24px;
		border-radius: 6px;
		background: #e5e5e5;
		overflow: hidden;
	}

	.used {
		height: 100%;
		background: #4360ff;
	}

	.capacity small {
		font-size: 15px;
		color: #c9cad1;
	}

	.fab {
		position: absolute;
		top: 14px;
		right: 26px;
		display: grid;
		place-items: center;
		width: 51px;
		height: 51px;
		border-radius: 50%;
		background: linear-gradient(160deg, #5468ff, #3a5af8);
		box-shadow: 0 2px 6px rgba(40, 50, 110, 0.35);
		color: #fff;
	}

	.fab svg {
		width: 24px;
		height: 24px;
	}

	.dimmed .search,
	.dimmed .track {
		background: #d6dbd0;
	}

	/* all apps */
	.overlay {
		position: absolute;
		inset: 0;
		z-index: 1;
		display: flex;
		flex-direction: column;
		align-items: center;
		padding-top: 130px;
		background: rgba(0, 0, 0, 0.84);
		color: #fff;
	}

	.overlay-head {
		box-sizing: border-box;
		display: flex;
		align-items: center;
		justify-content: space-between;
		width: 100%;
		height: 48px;
		padding: 0 47px 0 31px;
	}

	.overlay-head h2 {
		font-size: 23px;
		line-height: 32px;
		font-weight: 400;
	}

	.app-grid.all {
		width: 100%;
		row-gap: 31px;
		padding: 19px 0 7px;
	}

	.all .app {
		gap: 11px;
		font-size: 15px;
		line-height: 22px;
	}

	.all .app-icon {
		width: 44px;
		height: 44px;
	}

	.close {
		display: grid;
		place-items: center;
		width: 51px;
		height: 51px;
		border-radius: 50%;
		background: rgba(120, 120, 120, 0.35);
	}

	.close svg {
		width: 18px;
		height: 18px;
	}

	/* red frames around the step to tap */
	.mark {
		position: absolute;
		border: 4px solid #ed1c24;
		border-radius: 2px;
		pointer-events: none;
		z-index: 1;
		box-sizing: border-box;
	}

	.mark-more {
		top: 0;
		right: 0;
		width: 124px;
		height: 59px;
	}

	.mark-app {
		inset: -22px 8px -27px 6px;
	}

	.mark-tool {
		inset: 5px auto 8px 9px;
		width: 274px;
	}

	.mark-add {
		inset: -14px -12px -19px -18px;
	}

	/* tool pages */
	.toolbar {
		display: flex;
		align-items: center;
		justify-content: space-between;
		height: 55px;
		padding: 0 15px 0 17px;
	}

	h1 {
		padding: 0 19px 17px;
		font-size: 28px;
		line-height: 54px;
		font-weight: 700;
	}

	h1.ruled {
		border-bottom: 1px solid #e6e7ea;
	}

	.tools {
		display: grid;
		gap: 26px;
		padding: 0 19px;
	}

	.tool {
		position: relative;
		display: flex;
		align-items: center;
		justify-content: space-between;
		padding: 17px 20px 17px 19px;
		border-radius: 10px;
		background: linear-gradient(90deg, #e4f7ff 0, #e5f1ff 12%, #e4eeff 68%, #edeafe 69%, #eee8fe 94%, #eee5ff 100%);
		text-align: left;
		color: #6c717e;
	}

	.tool-text {
		display: flex;
		flex-direction: column;
		gap: 9px;
		font-size: 18px;
		line-height: 28px;
	}

	.tool strong {
		display: flex;
		align-items: center;
		gap: 7px;
		font-size: 20px;
		font-weight: 700;
		color: #26292e;
	}

	.tool strong .help {
		color: #868d99;
	}

	.formats {
		display: flex;
		align-items: center;
		gap: 6px;
		padding: 22px 38px;
		font-size: 18px;
		line-height: 28px;
		color: #4560e0;
	}

	.drop {
		position: relative;
		display: flex;
		flex-direction: column;
		align-items: center;
		margin: 38px 19px 0;
		padding: 63px 0 58px;
		border-radius: 12px;
		overflow: hidden;
	}

	.outline {
		position: absolute;
		inset: 0;
		width: 100%;
		height: 100%;
	}

	.plus {
		width: 42px;
		height: 42px;
	}

	.drop p {
		margin: 27px 0 24px;
		font-size: 18px;
		line-height: 28px;
	}

	.add {
		position: relative;
		width: 178px;
		height: 45px;
		border-radius: 23px;
		background: #4360ff;
		color: #fff;
		font-size: 18px;
	}
</style>
